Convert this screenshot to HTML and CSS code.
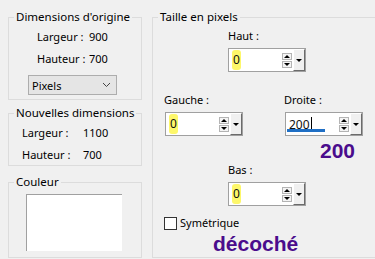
FILE: index.html
```html
<!DOCTYPE html>
<html>
<head lang="fr">
    <meta charset="UTF-8">
    <title>Taille du support</title>
    <link rel="stylesheet" href="styles.css">
</head>
<body>
    <div class="left">
        <fieldset class="group g-orig">
            <legend>Dimensions d'origine</legend>
            <div class="dims">
                <span class="lbl">Largeur :</span><span>900</span>
                <span class="lbl">Hauteur :</span><span>700</span>
            </div>
            <div class="select">
                <span>Pixels</span>
                <svg width="9" height="6" viewBox="0 0 9 6"><polyline points="1,1 4.5,4.5 8,1" fill="none" stroke="#444" stroke-width="1"/></svg>
            </div>
        </fieldset>
        <fieldset class="group g-new">
            <legend>Nouvelles dimensions</legend>
            <div class="dims">
                <span class="lbl">Largeur :</span><span>1100</span>
                <span class="lbl">Hauteur :</span><span>700</span>
            </div>
        </fieldset>
        <fieldset class="group g-color">
            <legend>Couleur</legend>
            <div class="swatch"></div>
        </fieldset>
    </div>

    <fieldset class="group g-size">
        <legend>Taille en pixels</legend>
        <div class="size">
            <div class="cell c-top">
                <div class="cap">Haut :</div>
                <div class="spin">
                    <div class="field"><span class="hl">0</span></div>
                    <div class="arrows"><i class="up"></i><i class="down"></i></div>
                    <div class="drop"><i class="down"></i></div>
                </div>
            </div>
            <div class="pair">
                <div class="cell">
                    <div class="cap">Gauche :</div>
                    <div class="spin">
                        <div class="field"><span class="hl">0</span></div>
                        <div class="arrows"><i class="up"></i><i class="down"></i></div>
                        <div class="drop"><i class="down"></i></div>
                    </div>
                </div>
                <div class="cell">
                    <div class="cap">Droite :</div>
                    <div class="spin">
                        <div class="field focus"><span>200</span><span class="caret"></span><span class="bar"></span></div>
                        <div class="arrows"><i class="up"></i><i class="down"></i></div>
                        <div class="drop"><i class="down"></i></div>
                    </div>
                    <div class="note n-val">200</div>
                </div>
            </div>
            <div class="cell c-bottom">
                <div class="cap">Bas :</div>
                <div class="spin">
                    <div class="field"><span class="hl">0</span></div>
                    <div class="arrows"><i class="up"></i><i class="down"></i></div>
                    <div class="drop"><i class="down"></i></div>
                </div>
            </div>
            <label class="check"><span class="box"></span>Symétrique</label>
            <div class="note n-check">décoché</div>
        </div>
    </fieldset>
</body>
</html>
```

FILE: styles.css
```css
*{
    margin: 0;
    padding: 0;
    box-sizing: border-box;
}
body{
    background: #f0f0f0;
    font-family: "Noto Sans", "Liberation Sans", sans-serif;
    font-size: 11px;
    color: #000;
    white-space: nowrap;
    display: flex;
    gap: 10px;
    padding: 9px 0 0 8px;
    height: 259px;
    overflow: hidden;
}
.left{
    width: 134px;
    flex: none;
    display: flex;
    flex-direction: column;
}
.group{
    border: 1px solid #dcdcdc;
    min-width: 0;
}
.group legend{
    margin-left: 5px;
    padding: 0 2px;
    line-height: 16px;
    font-size: 11.5px;
}

/* dimensions */
.dims{
    display: grid;
    grid-auto-rows: 22px;
    align-items: center;
}
.g-orig .dims{
    grid-template-columns: 52px auto;
    margin-left: 28px;
}
.g-new .dims{
    grid-template-columns: 61px auto;
    margin-left: 13px;
}
.g-orig{
    padding-bottom: 4px;
}
.select{
    margin: 6px 0 0 19px;
    width: 89px;
    height: 20px;
    background: #e5e5e5;
    border: 1px solid #adadad;
    display: flex;
    align-items: center;
    justify-content: space-between;
    padding: 0 5px 0 3px;
}
.g-new{
    margin-top: 5px;
}
.g-color{
    margin-top: 8px;
    padding: 4px 0 6px 0;
}
.swatch{
    margin-left: 17px;
    width: 96px;
    height: 57px;
    background: #fff;
    border-top: 1px solid #a0a0a0;
    border-left: 1px solid #a0a0a0;
}

/* taille en pixels */
.g-size{
    width: 240px;
    flex: none;
    height: 249px;
}
.size{
    padding: 3px 0 0 11px;
    display: flex;
    flex-direction: column;
}
.cap{
    line-height: 16px;
    margin-bottom: 4px;
}
.c-top,
.c-bottom{
    margin-left: 64px;
}
.pair{
    display: flex;
    gap: 41px;
    margin-top: 20px;
}
.c-bottom{
    margin-top: 1px;
}
.spin{
    display: flex;
    width: 78px;
    height: 24px;
    border: 1px solid #a0a0a0;
    background: #fff;
}
.pair .spin{
    margin-left: 1px;
}
.field{
    flex: 1;
    position: relative;
    display: flex;
    align-items: center;
    padding-left: 3px;
    color: #111;
    font-size: 12px;
}
.hl{
    background: #fdf76a;
    height: 20px;
    line-height: 20px;
    padding: 0 1px;
    border-radius: 3px;
}
.caret{
    width: 1px;
    height: 14px;
    background: #000;
    margin-left: 1px;
}
.bar{
    position: absolute;
    left: 1px;
    bottom: 3px;
    width: 38px;
    height: 3px;
    background: #1f6fc5;
}
.arrows{
    width: 12px;
    display: flex;
    flex-direction: column;
    justify-content: center;
    align-items: center;
    gap: 1px;
}
.arrows i{
    width: 10px;
    height: 7px;
    border: 1px solid #b4b4b4;
    background: #f4f4f4;
    display: flex;
    align-items: center;
    justify-content: center;
}
.up::after,
.down::after{
    content: "";
    border-left: 3px solid transparent;
    border-right: 3px solid transparent;
}
.up::after{
    border-bottom: 3px solid #000;
}
.down::after{
    border-top: 3px solid #000;
}
.drop{
    width: 12px;
    background: #f0f0f0;
    border-left: 1px solid #fff;
    border-top: 1px solid #fff;
    border-right: 1px solid #6b6b6b;
    border-bottom: 1px solid #6b6b6b;
    display: flex;
    align-items: center;
    justify-content: center;
}
.drop i{
    display: flex;
}
.note{
    font-family: "Liberation Sans", Arial, sans-serif;
    font-weight: bold;
    font-size: 21px;
    line-height: 20px;
    color: #4a0c8c;
}
.n-val{
    margin-top: 5px;
    text-align: right;
    padding-right: 8px;
}
.check{
    display: flex;
    align-items: center;
    gap: 3px;
    margin-top: 9px;
    line-height: 16px;
}
.box{
    width: 13px;
    height: 13px;
    border: 1px solid #333;
    background: #fff;
}
.n-check{
    margin: 3px 0 0 49px;
}
```
